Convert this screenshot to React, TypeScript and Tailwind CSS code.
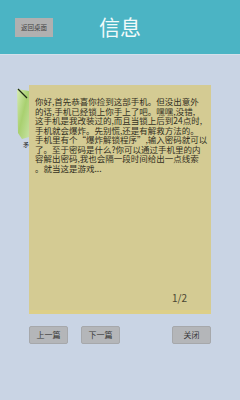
import React from "react";

const lines = [
  "你好,首先恭喜你捡到这部手机。但没出意外",
  "的话,手机已经锁上你手上了吧。嘿嘿,没错,",
  "这手机是我改装过的,而且当锁上后到24点时,",
  "手机就会爆炸。先别慌,还是有解救方法的。",
  "手机里有个\u201C爆炸解锁程序\u201D,输入密码就可以",
  "了。至于密码是什么?你可以通过手机里的内",
  "容解出密码,我也会隔一段时间给出一点线索",
  "。就当这是游戏...",
];

export default function App() {
  const font = { fontFamily: '"Noto Sans CJK SC", "Noto Sans", sans-serif' };
  return (
    <div className="w-[240px] h-[400px] bg-[#c9d4e4] flex flex-col overflow-hidden" style={font}>
      <div className="h-[55px] bg-[#4bb4c4] grid grid-cols-[1fr_auto_1fr] items-center border-b border-[#d4e0ea]">
        <div className="pl-[15px] flex items-center">
          <div className="w-[38px] h-[19px] bg-[#b0b0b0] flex items-center justify-center text-[6.5px] text-[#444] leading-none">
            返回桌面
          </div>
        </div>
        <div className="text-[21px] text-[#f2fafa] leading-none pb-[2px]">信息</div>
        <div />
      </div>

      <div className="flex mt-[30px] ml-[17px]">
        <div className="w-[12px] flex flex-col pt-[2px]">
          <svg width="12" height="62" viewBox="0 0 12 62">
            <defs>
              <linearGradient id="g" x1="0" y1="0" x2="1" y2="1">
                <stop offset="0" stopColor="#d7ecb4" />
                <stop offset="0.5" stopColor="#a9d070" />
                <stop offset="1" stopColor="#c6e2a2" />
              </linearGradient>
            </defs>
            <polygon points="0,2 12,4 12,50 5,52 1,46" fill="url(#g)" />
            <line x1="1" y1="2" x2="10" y2="11" stroke="#1e2a14" strokeWidth="1.3" />
            <text x="6" y="60" fontSize="6" fill="#222">矛</text>
          </svg>
        </div>
        <div className="w-[182px] h-[229px] bg-[#d4cb93] border-b-[4px] border-[#ddcf88] flex flex-col pt-[12px] pl-[6px] pr-[24px] pb-[6px]">
          <div className="text-[8.5px] leading-[9.5px] text-[#33301f] whitespace-nowrap">
            {lines.map((l, i) => (
              <div key={i}>{l}</div>
            ))}
          </div>
          <div className="mt-auto text-right text-[10px] leading-[12px] text-[#4a4632]">1/2</div>
        </div>
      </div>

      <div className="ml-[29px] w-[182px] mt-[12px] flex items-center text-[8px] text-[#3a3a3a]">
        <div className="w-[39px] h-[18px] bg-[#b4b6b9] border border-[#a6a8ab] rounded-[2px] flex items-center justify-center">上一篇</div>
        <div className="ml-[13px] w-[39px] h-[18px] bg-[#b4b6b9] border border-[#a6a8ab] rounded-[2px] flex items-center justify-center">下一篇</div>
        <div className="ml-auto w-[39px] h-[18px] bg-[#b4b6b9] border border-[#a6a8ab] rounded-[2px] flex items-center justify-center">关闭</div>
      </div>
    </div>
  );
}
